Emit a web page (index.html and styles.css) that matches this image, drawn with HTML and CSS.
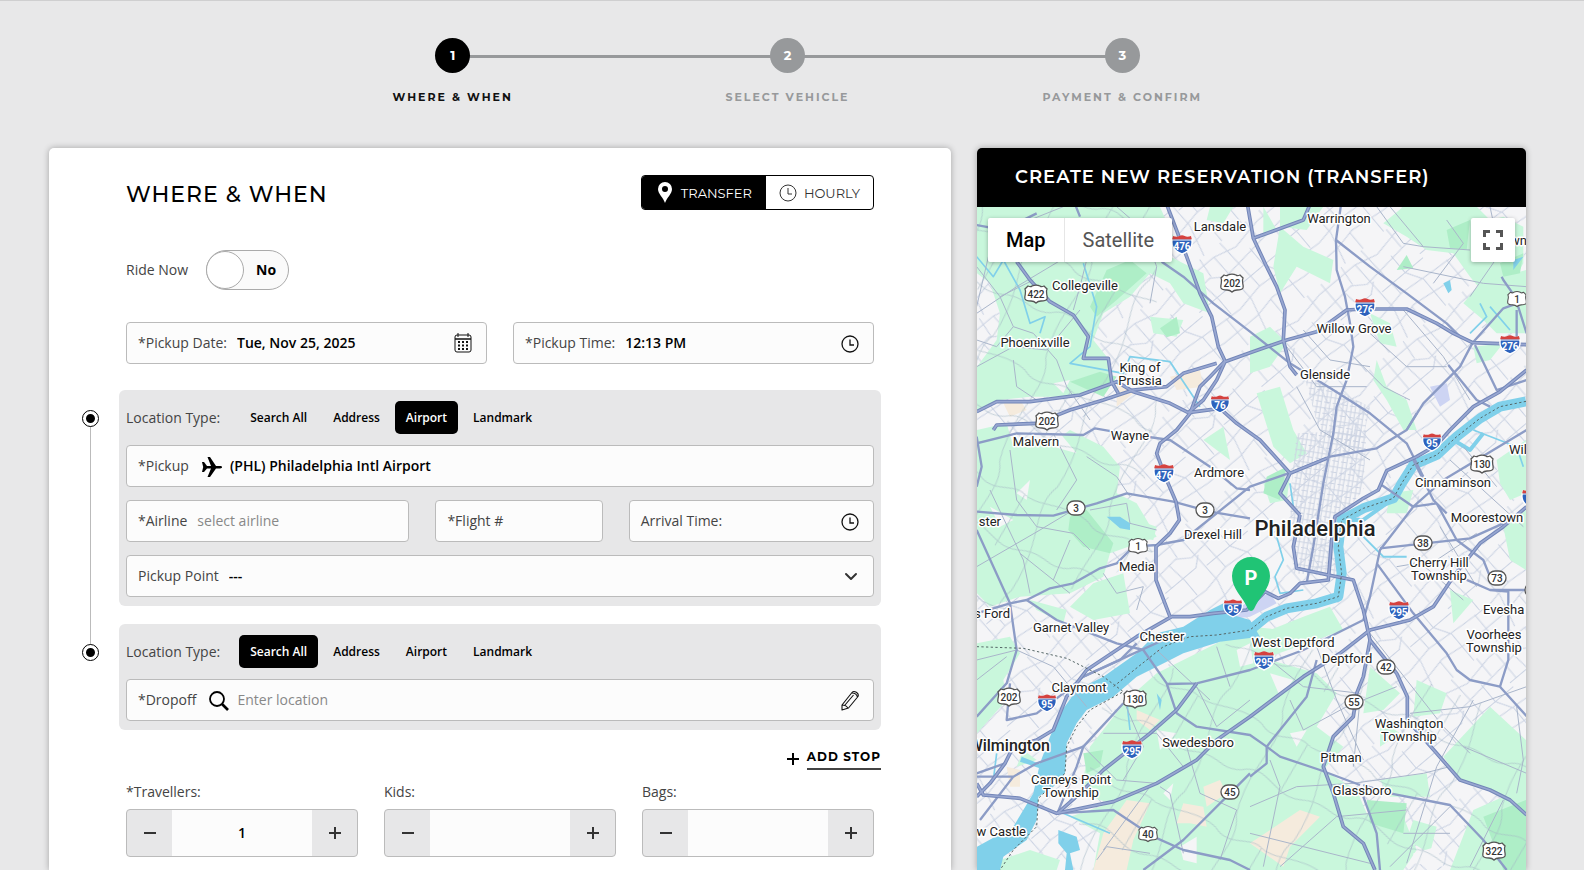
FILE: index.html
```html
<!DOCTYPE html>
<html lang="en">
<head>
<meta charset="utf-8">
<meta name="viewport" content="width=device-width, initial-scale=1">
<title>Create New Reservation</title>
<link rel="stylesheet" href="styles.css">
</head>
<body>
<div class="page">
  <ol class="steps">
    <li class="step step-current"><span class="step-number">1</span><span class="step-name">WHERE &amp; WHEN</span></li>
    <li class="step"><span class="step-number">2</span><span class="step-name">SELECT VEHICLE</span></li>
    <li class="step"><span class="step-number">3</span><span class="step-name">PAYMENT &amp; CONFIRM</span></li>
  </ol>

  <main class="columns">
    <form class="card">
      <header class="card-head">
        <h1>WHERE &amp; WHEN</h1>
        <div class="mode" role="group" aria-label="Service type">
          <button type="button" class="mode-button mode-active">
            <svg width="14" height="21" viewBox="0 0 14 21" aria-hidden="true"><path fill="#fff" fill-rule="evenodd" d="M7 0a7 7 0 0 1 7 7c0 5-5 8-7 14C5 15 0 12 0 7a7 7 0 0 1 7-7zm0 4a3 3 0 1 0 0 6 3 3 0 0 0 0-6z"/></svg>
            TRANSFER
          </button>
          <button type="button" class="mode-button">
            <svg width="18" height="18" viewBox="0 0 18 18" fill="none" stroke="#333" aria-hidden="true"><circle cx="9" cy="9" r="8"/><path d="M9 4v6h4"/></svg>
            HOURLY
          </button>
        </div>
      </header>

      <div class="ride-now">
        <label for="ride-now">Ride Now</label>
        <span class="switch"><input type="checkbox" id="ride-now"><span class="knob"></span><span class="switch-text">No</span></span>
      </div>

      <div class="pair">
        <div class="field">
          <label for="date">*Pickup Date:</label>
          <input id="date" type="text" value="Tue, Nov 25, 2025">
          <svg width="18" height="20" viewBox="0 0 18 20" aria-hidden="true"><rect x="1" y="2" width="16" height="17" rx="2" fill="none" stroke="#111"/><path d="M1 6h16" stroke="#111" stroke-width="1.5"/><path d="M4 0v4M14 0v4" stroke="#111"/><path d="M4 9h11M4 12.5h11M4 16h11" stroke="#111" stroke-width="2" stroke-dasharray="2 2"/></svg>
        </div>
        <div class="field">
          <label for="time">*Pickup Time:</label>
          <input id="time" type="text" value="12:13 PM">
          <svg class="icon-low" width="18" height="20" viewBox="0 0 18 20" fill="none" stroke="#111" stroke-width="1.3" aria-hidden="true"><circle cx="9" cy="11" r="8"/><path d="M9 6.500v5.500h4"/></svg>
        </div>
      </div>

      <section class="stops">
        <div class="stop stop-linked">
          <div class="tabs">
            <span class="tabs-label">Location Type:</span>
            <button type="button" class="tab">Search All</button>
            <button type="button" class="tab">Address</button>
            <button type="button" class="tab tab-active">Airport</button>
            <button type="button" class="tab">Landmark</button>
          </div>
          <div class="field">
            <label for="pickup">*Pickup</label>
            <svg width="20" height="22" viewBox="0 0 20 22" aria-hidden="true"><path transform="translate(0 2)" d="M0 5h2l3 4h4L5.500 0H8l6 9h4c1.500 0 2 .6 2 1.200s-.5 1.200-2 1.200h-4L8 20H5.500L9 11.400H5L2 15H0l1.200-5z"/></svg>
            <input id="pickup" type="text" value="(PHL) Philadelphia Intl Airport">
          </div>
          <div class="flight">
            <div class="field">
              <label for="airline">*Airline</label>
              <input id="airline" type="text" placeholder="select airline">
            </div>
            <div class="field">
              <label for="flight">*Flight #</label>
              <input id="flight" type="text">
            </div>
            <div class="field">
              <label for="arrival">Arrival Time:</label>
              <input id="arrival" type="text">
              <svg width="18" height="20" viewBox="0 0 18 20" fill="none" stroke="#111" stroke-width="1.3" aria-hidden="true"><circle cx="9" cy="11" r="8"/><path d="M9 6.500v5.500h4"/></svg>
            </div>
          </div>
          <div class="field">
            <label for="point">Pickup Point</label>
            <select id="point"><option>---</option></select>
            <svg width="17" height="18" viewBox="0 0 17 18" fill="none" stroke="#333" stroke-width="2" stroke-linecap="round" stroke-linejoin="round" aria-hidden="true"><path d="M4 7l5 5 5-5"/></svg>
          </div>
        </div>

        <div class="stop">
          <div class="tabs">
            <span class="tabs-label">Location Type:</span>
            <button type="button" class="tab tab-active">Search All</button>
            <button type="button" class="tab">Address</button>
            <button type="button" class="tab">Airport</button>
            <button type="button" class="tab">Landmark</button>
          </div>
          <div class="field">
            <label for="dropoff">*Dropoff</label>
            <svg width="20" height="22" viewBox="0 0 20 22" fill="none" stroke="#000" aria-hidden="true"><circle cx="8" cy="10" r="7" stroke-width="1.800"/><path d="M13 15l6 6" stroke-width="2.600"/></svg>
            <input id="dropoff" type="text" placeholder="Enter location">
            <svg width="18" height="22" viewBox="0 0 18 22" fill="none" stroke="#111" stroke-width="1.100" stroke-linejoin="round" aria-hidden="true"><path d="M1 21V16L11 3.500c2-2.500 7.500.5 6 4L7.500 19zM11 4c2.500 0 5 1.500 5.500 4.500M1 16c3 0 5 1 6 3.500M4 16L12.500 6"/></svg>
          </div>
        </div>
      </section>

      <div class="add-row">
        <button type="button" class="add-stop">
          <svg width="12" height="14" viewBox="0 0 12 14" stroke="#000" stroke-width="2" aria-hidden="true"><path d="M6 2v12M0 8h12"/></svg>
          <span>ADD STOP</span>
        </button>
      </div>

      <div class="counts">
        <div class="count">
          <label for="travellers">*Travellers:</label>
          <div class="stepper">
            <button type="button" aria-label="Fewer travellers"><svg width="14" height="14" viewBox="0 0 14 14"><path d="M1 7h12"/></svg></button>
            <input id="travellers" type="number" value="1">
            <button type="button" aria-label="More travellers"><svg width="14" height="14" viewBox="0 0 14 14"><path d="M1 7h12M7 1v12"/></svg></button>
          </div>
        </div>
        <div class="count">
          <label for="kids">Kids:</label>
          <div class="stepper">
            <button type="button" aria-label="Fewer kids"><svg width="14" height="14" viewBox="0 0 14 14"><path d="M1 7h12"/></svg></button>
            <input id="kids" type="number">
            <button type="button" aria-label="More kids"><svg width="14" height="14" viewBox="0 0 14 14"><path d="M1 7h12M7 1v12"/></svg></button>
          </div>
        </div>
        <div class="count">
          <label for="bags">Bags:</label>
          <div class="stepper">
            <button type="button" aria-label="Fewer bags"><svg width="14" height="14" viewBox="0 0 14 14"><path d="M1 7h12"/></svg></button>
            <input id="bags" type="number">
            <button type="button" aria-label="More bags"><svg width="14" height="14" viewBox="0 0 14 14"><path d="M1 7h12M7 1v12"/></svg></button>
          </div>
        </div>
      </div>
    </form>

    <aside class="summary">
      <h2>CREATE NEW RESERVATION (TRANSFER)</h2>
      <div class="map">
        <svg class="map-art" viewBox="977 207 549 663" preserveAspectRatio="xMinYMin slice" role="img" aria-label="Map of the Philadelphia area">
          <defs>
            <pattern id="suburb" width="310" height="290" patternUnits="userSpaceOnUse" patternTransform="rotate(-40)">
              <path d="M0 22H140L210 40 310 22M0 70L90 62 130 90 310 70M0 121H120L150 95M150 136H310M0 186L100 192 190 176 310 186M24 0V121M62 62L70 130V186M103 0L96 62M140 20L146 190 120 290M181 0L190 176M240 70V136L270 186V290M0 240H130L200 226 310 240M50 186V290M190 226V290M280 0V70" fill="none" stroke="#cbd3e3" stroke-width="3"/>
            </pattern>
            <pattern id="county" width="360" height="340" patternUnits="userSpaceOnUse" patternTransform="rotate(24)">
              <path d="M0 60C60 100 100 40 150 60S280 30 360 60M0 210C70 160 120 250 200 220S300 240 360 210M40 0C90 80 10 180 40 340M230 0C180 90 260 160 230 340M150 60L130 236" fill="none" stroke="#a3b7c4" stroke-width="3"/>
            </pattern>
            <pattern id="city" width="26" height="34" patternUnits="userSpaceOnUse" patternTransform="rotate(9)">
              <path d="M0 8H26M0 24H18M6 0V34M18 0V34" fill="none" stroke="#ccd3e2" stroke-width="3"/>
            </pattern>
            <symbol id="interstate" viewBox="0 0 24 20" overflow="visible">
              <path d="M2 1c3 1 5 1 7 0 2-1 4-1 6 0 2 1 4 1 7 0 3 8 0 15-10 19C2 16-1 9 2 1z" fill="#2c62bd" stroke="#fff" stroke-width="1.500"/>
              <path d="M2 0c3 1 5 1 7 0 2-1 4-1 6 0 2 1 4 1 7 0l1 4H1z" fill="#d5423f"/>
              <path d="M1 4.500h22" stroke="#fff"/>
            </symbol>
            <symbol id="usroute" viewBox="0 0 24 18" overflow="visible">
              <path d="M4 1c2 1 3 1 4 0 2-1 6-1 8 0 1 1 2 1 4 0l3 3c-2 4 1 6 0 10-1 2-4 2-6 2s-4 1-5 2c-1-1-3-2-5-2s-5 0-6-2c-1-4 2-6 0-10z" fill="#fff" stroke="#555" stroke-width="1.300"/>
            </symbol>
            <symbol id="stateroute" viewBox="0 0 20 16" overflow="visible"><rect x="1" y="1" width="18" height="14" rx="7" fill="#fff" stroke="#555" stroke-width="1.300"/></symbol>

            <g id="highways">
              <path d="M585 0L650 170 690 280 725 350 745 440 765 483 720 530 690 560 660 640 620 690 570 730 560 760 590 840 618 905 628 960 600 1000 558 1040 558 1140 600 1250"/>
              <path d="M20 635L80 605 180 605 330 585 440 545 490 575 600 610 655 638 700 600 740 540 765 485 840 458 950 420 1040 395 1130 330 1180 327 1310 327 1400 370 1450 400 1508 428 1670 434"/>
              <path d="M140 185L180 240 240 305 310 345 355 410 340 475 415 475 425 545 445 580"/>
              <path d="M70 690L80 675 200 670 300 630 400 600 490 570 590 560 640 520 740 490"/>
              <path d="M655 638L750 625 800 670 870 720 960 820 930 880 990 945M1070 775L960 820"/>
              <path d="M1670 510L1590 575 1510 620 1440 690 1400 735 1340 770 1250 812 1225 870 1180 895 1095 950 1085 1020 1075 1140 990 1150 960 1180 925 1195 885 1175 830 1230 730 1240 660 1250 605 1250 500 1310 440 1350 350 1410 290 1490 250 1590 200 1620 130 1640 105 1690 60 1750 20 1790"/>
              <path d="M990 945L970 1040 980 1105 1075 1125 1150 1140 1180 1230 1200 1320 1180 1430 1160 1480 1150 1550 1090 1610 1060 1700 1090 1780 1120 1880 1180 1930 1215 2010"/>
              <path d="M1670 920L1600 980 1530 1030 1450 1130 1390 1220 1320 1260 1200 1290 1110 1360 1000 1430 840 1550 740 1620 680 1680 560 1750 430 1805 260 1840 150 1795 40 1785 20 1750"/>
              <path d="M680 1450L620 1530 540 1600 400 1710 330 1780 262 1840"/>
              <path d="M1200 1320L1280 1420 1312 1490 1312 1560 1400 1660 1470 1740 1560 1770 1620 1800 1670 1845"/>
              <path d="M1030 -10L1000 60 850 115 830 0M850 115L890 200 920 260 945 330 940 420 960 500 980 525"/>
            </g>
            <g id="arterials">
              <path d="M1115 0L1098 120 1100 210 1125 290 1140 370 1150 440 1130 540 1100 620 1090 700 1060 850 1030 1040 1010 1150"/>
              <path d="M1098 120L1200 200 1310 280 1430 370 1470 410 1508 428 1600 325 1670 300"/>
              <path d="M575 185L640 230 730 310 840 395 960 490 1090 570 1200 640 1310 730 1360 830"/>
              <path d="M20 730L140 700 340 705 375 685 460 700 600 720 720 800 800 865 840 870"/>
              <path d="M20 935L140 945 250 947 380 910 470 880 610 905 720 935 840 955M20 710L35 800 20 860M20 990L120 1210 140 1350 110 1450 20 1550"/>
              <path d="M20 1240L120 1210 170 1200 240 1165 310 1150 390 1105 440 1090 490 1040 560 1035 640 1020 840 860 970 815 1080 770 1220 745 1310 690 1340 640"/>
              <path d="M170 1200L260 1260 440 1330 520 1350 590 1450 620 1540 680 1580 840 1605 890 1640 930 1670 1050 1710 1170 1755M1180 1755L1260 1780 1440 1815 1540 1920 1610 2010"/>
              <path d="M590 1452L680 1450 840 1410 1000 1350 1180 1260 1200 1190 1230 1050 1330 920 1420 840 1670 690"/>
              <path d="M1508 428L1470 500 1360 610 1310 690M1435 495L1520 600 1560 620M1515 435L1580 570 1670 540M1230 1045L1500 1015 1600 970M1220 1090L1330 1240 1430 1360 1460 1410 1500 1440 1590 1460 1680 1560"/>
              <path d="M1235 855L1330 920 1400 910 1460 1020 1540 1080 1560 1130M1330 780L1390 900 1430 940M1480 1135L1560 1170 1615 1175 1615 1380 1590 1460M1560 1170H1680"/>
              <path d="M460 1510L340 1640 320 1700 262 1840 430 1830 550 1910 640 1950 780 1980 840 2010M840 1720L640 1920 520 2010"/>
              <path d="M20 1730H130L200 1690 340 1640M130 1730L30 1860M105 1690L20 1720"/>
              <path d="M120 1450L110 1560 200 1540 280 1480 340 1430 450 1380 500 1330"/>
              <path d="M1180 1790L1220 1900 1230 2010M1040 1380L1010 1490 890 1640 890 1690 840 1730M340 1430L470 1370 580 1320"/>
              <path d="M1595 230L1600 240 1635 290 1670 400M1640 330V420M310 0L330 50M20 75L100 90 200 40"/>
            </g>
            <g id="lanes">
              <path d="M20 200L90 290 130 380 190 400 260 480 290 560 360 660M60 150L20 320M20 340L140 260 290 170M90 290L190 240M20 500L130 440 230 450 330 330M130 480L140 560 200 600M20 420L80 440 130 380M180 60L280 20M440 20L520 90 560 200 540 310M350 180L330 260 310 330"/>
              <path d="M120 750L140 900 200 980 310 1000 360 1050M250 700L320 840 260 930M20 1100L210 990 310 930M60 870L160 1080 180 1180M350 770L440 830 480 890M360 930L470 910 480 970 560 990M150 1060L300 1180M400 1120L440 1180 520 1160 500 1230M300 1020L250 1140"/>
              <path d="M20 1380L140 1350 250 1400 350 1520M20 1440L110 1370M400 1600L560 1600 640 1700M460 1500L520 1640 460 1740M680 1460L740 1580 840 1500M650 1640L690 1780 800 1830 750 1980M340 1640L440 1740 560 1750M640 1960L600 1780 570 1760M400 1950L540 1760M560 1350L720 1500M740 1340L780 1460M380 1980L410 1940 540 1960"/>
              <path d="M840 1820L980 1760 1150 1750 1360 1720 1440 1700M880 2000L930 1760 900 1680M960 1500L1000 1590 1130 1520 1280 1460M900 1380L1000 1460 1170 1480M1040 1340L1100 1500 1180 1680M1170 1500L1150 1700M1200 1300L1420 1580 1500 1660M1320 1540L1500 1520 1670 1460M1480 1640L1670 1720M1510 1500L1400 1700 1310 1990M1440 1820L1260 2000M1600 1800L1500 2000M840 1900L1080 1960 1200 1990M930 2000L1100 1850 1310 1830M1640 1520L1660 1680 1640 1780M1300 1900H1440"/>
              <path d="M1220 20L1300 130 1360 140 1500 150M1260 20L1360 140M1430 60L1480 130 1390 250M1560 20L1590 160 1500 290M1300 200L1540 250 1670 260M1200 400L1310 500 1430 500M1300 330L1420 470 1500 600M1150 470L1240 560 1320 600M980 560L1050 690 1200 780M1000 390L1080 480 1200 500M950 440L1040 560 1190 560M1330 1070L1480 1200M1410 980L1520 1160M1280 1100L1400 1080 1520 1000M1440 780L1660 980M1480 740L1580 860"/>
            </g>
          </defs>

          <rect x="977" y="207" width="549" height="663" fill="#f5f5f7"/>
          <g transform="translate(970 200) scale(.33333)" fill="none">
            <rect x="21" y="21" width="1647" height="1989" fill="url(#suburb)"/>
            <g fill="#c9f7dc">
              <path d="M21 21H570L610 110 580 160 700 220 720 340 640 310 600 250 540 220 480 290 400 340 370 420 410 470 430 540 330 590 180 590 90 600 21 640V500L80 420 90 340 60 250 21 220z"/>
              <path d="M720 20H790L760 70 710 60zM930 20H1060L1010 90 930 80zM930 80L1000 140 1090 180 1080 250 1020 220 980 200 930 280 910 200zM1240 70L1300 20H1520L1560 60 1600 50 1660 80V190L1600 300 1550 290 1500 230 1450 160 1370 150 1310 110z"/>
              <path d="M880 20L920 90 880 110zM1530 250L1668 210V400L1580 400 1540 360 1480 310zM1510 440L1600 430 1560 480 1520 490zM840 410L900 380 950 430 900 500 840 520z"/>
              <path d="M1200 340L1260 370 1280 440 1230 430zM1220 480L1250 560 1310 600 1340 690 1300 690 1250 600 1210 540zM860 580L930 560 970 690 1010 760 960 790 910 740z"/>
              <path d="M21 690L110 670 130 740 260 720 300 690 400 740 450 800 440 880 500 910 560 1010 420 1060 400 1130 300 1180 150 1190 60 1220 21 1180z"/>
              <path d="M370 1150L460 1120 480 1240 370 1260 300 1220zM180 1200L290 1230 280 1270 200 1230zM500 960L560 980 550 1020 480 1010zM700 720L760 680 780 780zM840 1070L890 1090 860 1160 820 1130z"/>
              <path d="M21 1330L120 1310 150 1360 100 1440 110 1500 21 1600zM880 850L960 830 950 900 900 910zM1580 780L1668 720V880L1620 900 1590 850zM1000 1250L1080 1220 1120 1290 1010 1330 870 1380 900 1290z"/>
              <path d="M1600 980L1668 930V1110L1620 1080zM1440 1170L1510 1200 1450 1270zM1260 880L1330 870 1310 940 1250 940z"/>
              <path d="M470 1500L560 1420 700 1350 840 1280 940 1290 900 1380 1040 1420 1100 1480 1040 1580 1120 1640 1060 1710 1160 1770 1190 1840 1300 1850 1340 1950 1300 2010H370L390 1900 300 1850 420 1810 330 1780 360 1640z"/>
              <path d="M1200 1400L1290 1480 1240 1530 1180 1540zM1340 1440L1430 1480 1410 1540 1330 1550zM1230 1560L1290 1600 1230 1640zM1560 1520L1668 1620V2010H1440L1510 1830 1600 1790 1470 1740 1420 1670zM1230 1740L1370 1720 1380 1790 1260 1790zM1330 1860L1400 1880 1380 1960 1310 1920zM90 1980L180 1950 270 1980 260 2010H60z"/>
              <path d="M1440 20L1500 60 1450 110zM540 350L640 360 620 410 550 400zM160 1650L200 1680 140 1700z"/>
            </g>
            <g fill="#aeeec7">
              <path d="M410 210L480 180 530 220 440 300 380 350 360 320zM300 545L390 515 440 530 400 590zM570 385L620 350 630 400 590 412zM300 950L350 930 430 1030 420 1060 340 1040 295 990zM1430 90L1500 60 1490 150 1440 145zM1280 210L1310 165 1330 205zM1590 190L1660 160 1650 220 1600 230zM1190 1800L1310 1810 1300 1900 1200 1870zM1540 1850L1668 1800V2010H1600zM890 830L950 800 930 900 880 880zM340 1660L400 1650 390 1700 350 1720z"/>
            </g>
            <g fill="#f5ebdd">
              <path d="M600 530L690 510 700 560 620 570zM100 610L150 600 170 630 120 650zM440 550L490 580 440 620zM500 1530L570 1560 540 1590 500 1560zM470 1800L540 1810 490 1920 470 2010H370L400 1900zM700 1760L750 1740 770 1780 710 1820zM640 1810L700 1820 710 1880 660 1870 620 1870zM990 1830L1050 1850 960 1940 940 2000 840 1930zM110 1700L150 1710 150 1760 120 1760z"/>
            </g>
            <g fill="#f5f5f7"><path d="M420 370L470 350 460 400 410 410zM250 550L300 540 280 580zM270 700L320 760 250 740zM140 880L180 840 170 900zM60 920L130 960 90 980zM560 1590L620 1600 570 1650zM630 1940L680 1910 680 1990 640 1980zM580 1780L610 1750 600 1800zM800 1350L840 1330 850 1390 810 1400zM960 1600L1010 1590 980 1640zM900 1420L970 1440 930 1490zM1330 1960L1400 1940 1420 2000 1330 1990z"/></g>
            <path d="M980 700L1190 690 1180 870 1130 930 1100 1130 970 1120 960 900z" fill="url(#city)"/>
            <path d="M1000 520L1200 620 1170 760 1050 700z" fill="url(#city)"/>
            <path opacity=".55" d="M21 21H560V640L520 800 560 1050 400 1140 21 1250zM400 1500L840 1300 1300 1420 1668 1560V2010H300z" fill="url(#county)"/>
            <path d="M1380 560L1430 550 1440 600 1410 620zM840 1200L900 1180 920 1210 840 1250 760 1260 800 1230z" fill="#cdd4f3"/>
            <g stroke="#80d0ea" stroke-linejoin="round">
              <path stroke-width="30" d="M1668 604L1590 620 1530 655 1460 710 1400 765 1330 795 1295 850 1270 895 1180 925 1115 960 1105 1040 1115 1120 1105 1190 1040 1210 950 1225 890 1250 840 1290 740 1305 660 1310"/>
              <path stroke-width="12" d="M1115 960L1180 960 1250 910M1450 720L1500 750 1540 700"/>
              <path stroke-width="6" d="M1180 1010L1240 1070 1310 1070"/>
              <path stroke-width="5" d="M20 170L70 230 100 180 150 270 180 370 225 350 210 400M340 190L380 320 360 440 300 490 460 520 480 470 600 485 690 620M1530 310L1550 350 1500 400M1560 320L1620 390M960 850L970 920M920 1010L940 1080 915 1130 930 1180 1000 1170M1510 690L1640 740 1660 800M470 1500L480 1590M80 1660L70 1740M280 1840L350 1870 420 1900"/>
            </g>
            <path fill="#80d0ea" d="M640 1280L720 1230 780 1200 770 1240 840 1260 870 1310 750 1325 640 1360 590 1385 500 1430 430 1490 350 1530 320 1570 290 1630 285 1720 250 1760 205 1790 200 1860 170 1920 100 1970 90 2010H21V1940L130 1880 190 1780 210 1690 240 1610 270 1540 320 1470 400 1430 500 1360 560 1300zM410 950L450 950 480 970 480 990 450 985zM1420 250L1440 240 1445 270 1435 280zM560 1480L575 1500 570 1530zM155 1670L230 1700 225 1710 150 1685zM265 1890L320 1910 330 1950 300 1960 310 2010H285L290 1960 265 1930zM1630 180L1660 170 1630 210zM440 970L480 980 470 985z"/>
            <g stroke="#a9b5ca" stroke-width="3" stroke-linejoin="round"><use href="#lanes"/></g>
            <g stroke="#8c9cc6" stroke-width="7" stroke-linejoin="round"><use href="#arterials"/></g>
            <g stroke="#7386b8" stroke-width="11" stroke-linejoin="round"><use href="#highways"/></g>
            <g stroke="#98a7d1" stroke-width="5" stroke-linejoin="round"><use href="#highways"/></g>
            <path stroke="#566" stroke-width="3" stroke-dasharray="7 7" d="M1668 604L1590 620 1530 655 1460 710 1400 765 1330 795 1295 850 1270 895 1180 925 1115 960 1105 1040 1115 1120 1105 1190 1040 1210 950 1225 890 1250 840 1290 740 1305 660 1310 580 1340 430 1460M20 1340L160 1345 290 1375 400 1430 460 1475 360 1530 320 1580 290 1640 285 1720 205 1795 200 1880 130 1950 90 2010"/>
          </g>

          <g class="shield-interstate">
            <use href="#interstate" x="1171" y="236" width="22" height="18"/><text x="1182" y="250">476</text>
            <use href="#interstate" x="1354" y="299" width="22" height="18"/><text x="1365" y="313">276</text>
            <use href="#interstate" x="1499" y="336" width="22" height="18"/><text x="1510" y="350">276</text>
            <use href="#interstate" x="1210" y="396" width="20" height="17"/><text x="1220" y="409">76</text>
            <use href="#interstate" x="1153" y="465" width="22" height="18"/><text x="1164" y="479">476</text>
            <use href="#interstate" x="1422" y="434" width="20" height="17"/><text x="1432" y="447">95</text>
            <use href="#interstate" x="1223" y="600" width="20" height="17"/><text x="1233" y="613">95</text>
            <use href="#interstate" x="1388" y="602" width="22" height="18"/><text x="1399" y="616">295</text>
            <use href="#interstate" x="1253" y="652" width="22" height="18"/><text x="1264" y="666">295</text>
            <use href="#interstate" x="1037" y="695" width="20" height="17"/><text x="1047" y="708">95</text>
            <use href="#interstate" x="1121" y="741" width="22" height="18"/><text x="1132" y="755">295</text>
            <use href="#interstate" x="1521" y="490" width="22" height="18"/>
          </g>
          <g class="shield-route">
            <use href="#usroute" x="1024" y="285" width="24" height="18"/><text x="1036" y="298">422</text>
            <use href="#usroute" x="1220" y="274" width="24" height="18"/><text x="1232" y="287">202</text>
            <use href="#usroute" x="1507" y="290" width="20" height="18"/><text x="1517" y="303">1</text>
            <use href="#usroute" x="1035" y="412" width="24" height="18"/><text x="1047" y="425">202</text>
            <use href="#usroute" x="1128" y="537" width="20" height="18"/><text x="1138" y="550">1</text>
            <use href="#usroute" x="1470" y="455" width="24" height="18"/><text x="1482" y="468">130</text>
            <use href="#usroute" x="997" y="688" width="24" height="18"/><text x="1009" y="701">202</text>
            <use href="#usroute" x="1123" y="690" width="24" height="18"/><text x="1135" y="703">130</text>
            <use href="#usroute" x="1138" y="825" width="20" height="18"/><text x="1148" y="838">40</text>
            <use href="#usroute" x="1482" y="842" width="24" height="18"/><text x="1494" y="855">322</text>
            <use href="#stateroute" x="1066" y="500" width="20" height="16"/><text x="1076" y="512">3</text>
            <use href="#stateroute" x="1195" y="502" width="20" height="16"/><text x="1205" y="514">3</text>
            <use href="#stateroute" x="1413" y="535" width="20" height="16"/><text x="1423" y="547">38</text>
            <use href="#stateroute" x="1487" y="570" width="20" height="16"/><text x="1497" y="582">73</text>
            <use href="#stateroute" x="1376" y="659" width="20" height="16"/><text x="1386" y="671">42</text>
            <use href="#stateroute" x="1344" y="694" width="20" height="16"/><text x="1354" y="706">55</text>
            <use href="#stateroute" x="1220" y="784" width="20" height="16"/><text x="1230" y="796">45</text>
            <use href="#stateroute" x="1524" y="582" width="20" height="16"/>
          </g>
          <g class="towns">
            <text x="1220" y="231">Lansdale</text><text x="1085" y="290">Collegeville</text><text x="1035" y="347">Phoenixville</text>
            <text x="1140" y="372">King of</text><text x="1140" y="385">Prussia</text>
            <text x="1339" y="223">Warrington</text><text x="1354" y="333">Willow Grove</text><text x="1325" y="379">Glenside</text>
            <text class="town-start" x="1510" y="245">wn</text><text x="1130" y="440">Wayne</text><text x="1036" y="446">Malvern</text><text x="1219" y="477">Ardmore</text>
            <text x="1213" y="539">Drexel Hill</text><text x="1137" y="571">Media</text><text class="town-end" x="1001" y="526">ster</text>
            <text class="town-end" x="1010" y="618">s Ford</text><text x="1071" y="632">Garnet Valley</text><text x="1162" y="641">Chester</text>
            <text x="1453" y="487">Cinnaminson</text><text class="town-start" x="1509" y="454">Wil</text><text x="1487" y="522">Moorestown</text>
            <text x="1439" y="567">Cherry Hill</text><text x="1439" y="580">Township</text><text class="town-start" x="1483" y="614">Evesha</text>
            <text x="1494" y="639">Voorhees</text><text x="1494" y="652">Township</text><text x="1293" y="647">West Deptford</text><text x="1347" y="663">Deptford</text>
            <text x="1079" y="692">Claymont</text><text x="1071" y="784">Carneys Point</text><text x="1071" y="797">Township</text>
            <text class="town-end" x="1026" y="836">w Castle</text><text x="1198" y="747">Swedesboro</text>
            <text x="1409" y="728">Washington</text><text x="1409" y="741">Township</text><text x="1341" y="762">Pitman</text><text x="1362" y="795">Glassboro</text>
            <text class="town-end town-large" x="1050" y="751">Wilmington</text>
            <text class="town-city" x="1315" y="536">Philadelphia</text>
          </g>
          <path d="M1251 557a19 19 0 0 1 19 19c0 13-11 21-16 33q-3 4-6 0c-5-12-16-20-16-33a19 19 0 0 1 19-19z" fill="#20c475"/>
          <text class="pin-letter" x="1251" y="585">P</text>
        </svg>
        <div class="map-type">
          <button type="button" class="map-type-active">Map</button>
          <button type="button">Satellite</button>
        </div>
        <button type="button" class="fullscreen" aria-label="Toggle fullscreen view">
          <svg width="20" height="20" viewBox="0 0 20 20" fill="none" stroke="#555" stroke-width="3"><path d="M1.500 7V1.500H7M13 1.500h5.500V7M18.500 13v5.500H13M7 18.500H1.500V13"/></svg>
        </button>
      </div>
    </aside>
  </main>
</div>
</body>
</html>
```
FILE: styles.css
```css
*, *::before, *::after { box-sizing: border-box; }

body {
  margin: 0;
  background: #e8e8e9;
  color: #444;
  font: 14px/20px "Open Sans", "Noto Sans", sans-serif;
}

button, input, select { font: inherit; color: inherit; margin: 0; }
button { cursor: pointer; padding: 0; border: 0; background: none; }
svg { flex: none; display: block; }

.page {
  display: flex;
  flex-direction: column;
  min-height: 100vh;
  padding: 37px 58px 0 49px;
  border-top: 1px solid #cfcfd0;
}

/* Progress */
.steps {
  display: grid;
  grid-template-columns: repeat(3, 1fr);
  width: 68%;
  margin: 0 auto 41px;
  padding: 0;
  list-style: none;
  font-family: Montserrat, Inter, sans-serif;
  font-weight: 700;
  color: #97999b;
}
.step {
  position: relative;
  display: flex;
  flex-direction: column;
  align-items: center;
  gap: 14px;
}
.step + .step::before {
  content: "";
  position: absolute;
  top: 17px;
  right: 50%;
  width: 100%;
  height: 3px;
  background: #97999b;
}
.step-number {
  z-index: 1;
  width: 35px;
  height: 35px;
  border-radius: 50%;
  background: #97999b;
  color: #fff;
  font-size: 13px;
  line-height: 34px;
  text-align: center;
}
.step-name { font-size: 11px; letter-spacing: 2px; white-space: nowrap; }
.step-current { z-index: 1; color: #111; }
.step-current .step-number { background: #000; }

.columns {
  flex: 1;
  display: grid;
  grid-template-columns: minmax(0, 902fr) minmax(0, 549fr);
  gap: 26px;
}

/* Form */
.card {
  padding: 27px 77px 12px;
  border-radius: 5px 5px 0 0;
  background: #fff;
  box-shadow: 0 0 6px rgba(0, 0, 0, .3);
}
.card-head { display: flex; justify-content: space-between; align-items: center; }
h1 {
  margin: 5px 0 0;
  font: 500 22px/30px Montserrat, Inter, sans-serif;
  letter-spacing: 1px;
  color: #000;
}
.mode {
  display: flex;
  height: 35px;
  overflow: hidden;
  border: 1px solid #000;
  border-radius: 4px;
}
.mode-button {
  display: flex;
  align-items: center;
  gap: 7px;
  padding: 0 13px;
  font: 13px/20px Montserrat, Inter, sans-serif;
  color: #333;
}
.mode-active { gap: 9px; padding: 0 14px 0 16px; background: #000; color: #fff; }

.ride-now { display: flex; align-items: center; gap: 18px; margin: 40px 0 32px; }
.switch {
  display: grid;
  grid-template-columns: 38px 1fr;
  align-items: center;
  width: 83px;
  height: 40px;
}
.switch input {
  grid-area: 1 / 1 / 2 / 3;
  width: 100%;
  height: 100%;
  appearance: none;
  border: 1px solid #aaa;
  border-radius: 20px;
  background: #fafafa;
}
.knob {
  grid-area: 1 / 1;
  width: 38px;
  height: 38px;
  border: 1px solid #aaa;
  border-radius: 50%;
  background: #fff;
  pointer-events: none;
}
.switch-text {
  grid-area: 1 / 2;
  padding-left: 12px;
  font-weight: 700;
  color: #000;
  pointer-events: none;
}

.pair { display: grid; grid-template-columns: 1fr 1fr; gap: 26px; }
.field {
  display: flex;
  align-items: center;
  gap: 10px;
  height: 42px;
  padding: 0 14px 0 11px;
  border: 1px solid #bbb;
  border-radius: 4px;
  background: #fcfcfc;
}
.field label { white-space: nowrap; }
.field input, .field select {
  flex: 1;
  width: 0;
  min-width: 0;
  padding: 0;
  border: 0;
  outline: 0;
  background: none;
  appearance: none;
  font-weight: 600;
  color: #000;
}
.field input::placeholder { color: #888; font-weight: 400; opacity: 1; }
.field label + svg { margin-left: 3px; }
.field label + svg + input { margin-left: -2px; }

.stops { display: grid; gap: 18px; margin: 26px -7px 0; }
.stop {
  position: relative;
  display: grid;
  gap: 13px;
  padding: 11px 7px 9px;
  border-radius: 6px;
  background: #e7e7e8;
}
.stop::before {
  content: "";
  position: absolute;
  z-index: 1;
  left: -36px;
  top: 21px;
  width: 15px;
  height: 15px;
  border: 3px solid #fff;
  border-radius: 50%;
  outline: 1px solid #000;
  background: #000;
}
.stop-linked::after {
  content: "";
  position: absolute;
  left: -29px;
  top: 36px;
  bottom: -40px;
  width: 1px;
  background: #bbb;
}
.tabs { display: flex; align-items: center; height: 33px; margin-bottom: -2px; gap: 4px; }
.tabs-label { margin-right: 15px; }
.tab {
  height: 33px;
  padding: 0 11px;
  border-radius: 5px;
  font-size: 12px;
  font-weight: 600;
  color: #000;
}
.tab-active { background: #000; color: #fff; }
.flight { display: grid; grid-template-columns: 283fr 167fr 245fr; gap: 26px; }

.add-row { display: flex; justify-content: flex-end; margin: 16px -7px 12px; }
.add-stop {
  display: flex;
  align-items: center;
  gap: 8px;
  font: 700 12px/22px Montserrat, Inter, sans-serif;
  letter-spacing: 1px;
  color: #000;
}
.add-stop span { border-bottom: 2px solid #444; }

.counts { display: grid; grid-template-columns: repeat(3, 1fr); gap: 26px; }
.count { display: grid; gap: 7px; }
.stepper {
  display: grid;
  grid-template-columns: 45px minmax(0, 1fr) 45px;
  height: 48px;
  overflow: hidden;
  border: 1px solid #bbb;
  border-radius: 4px;
  background: #e7e7e8;
}
.stepper button { display: grid; place-items: center; }
.stepper svg { fill: none; stroke: #333; stroke-width: 2; }
.stepper input {
  width: 100%;
  padding: 0;
  border: 0;
  background: #fcfcfc;
  font-weight: 600;
  text-align: center;
  color: #000;
  appearance: textfield;
}
.stepper input::-webkit-inner-spin-button { appearance: none; margin: 0; }

/* Reservation summary */
.summary {
  display: flex;
  flex-direction: column;
  overflow: hidden;
  border-radius: 5px 5px 0 0;
  background: #000;
  box-shadow: 0 0 6px rgba(0, 0, 0, .3);
}
h2 {
  margin: 0;
  padding: 17px 38px 18px;
  font: 600 18px/24px Montserrat, Inter, sans-serif;
  letter-spacing: 1px;
  color: #fff;
}
.map { position: relative; flex: 1; font-family: Roboto, sans-serif; }
.map-art { position: absolute; inset: 0; width: 100%; height: 100%; }
.map-type, .fullscreen {
  position: absolute;
  top: 11px;
  height: 44px;
  border-radius: 2px;
  background: #fff;
  box-shadow: 0 1px 4px rgba(0, 0, 0, .3);
}
.map-type { left: 11px; display: flex; font-size: 20px; }
.map-type button { padding: 0 18px; color: #555; }
.map-type .map-type-active { border-right: 1px solid #e6e6e6; font-weight: 500; color: #000; }
.fullscreen { right: 11px; width: 44px; display: grid; place-items: center; }

.map-art text { text-anchor: middle; }
.towns text {
  font-size: 13px;
  fill: #222;
  stroke: #fff;
  stroke-width: 3px;
  stroke-linejoin: round;
  paint-order: stroke;
}
.towns .town-end { text-anchor: end; }
.towns .town-start { text-anchor: start; }
.towns .town-large { font-size: 16px; font-weight: 500; }
.towns .town-city { font-size: 22px; font-weight: 500; }
.shield-interstate text { font-size: 10px; font-weight: 700; fill: #fff; }
.shield-route text { font-size: 10px; font-weight: 500; fill: #333; }
.map-art .pin-letter { font-size: 20px; font-weight: 700; fill: #fff; }
```
